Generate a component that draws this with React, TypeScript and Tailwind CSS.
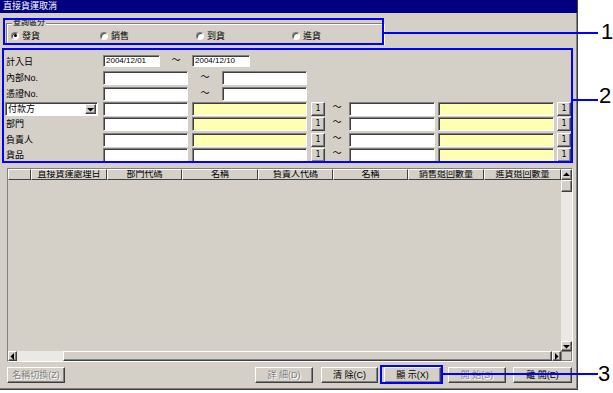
import React from "react";

const raised =
  "bg-[#d4d0c8] border border-t-white border-l-white border-b-[#404040] border-r-[#404040] shadow-[inset_-1px_-1px_0_#808080]";
const sunken =
  "border border-t-[#808080] border-l-[#808080] border-b-white border-r-white shadow-[inset_1px_1px_0_#404040]";

function Tri({ dir }: { dir: "up" | "down" | "left" | "right" }) {
  const pts: Record<string, string> = {
    up: "0,4 3.5,0.5 7,4",
    down: "0,1 3.5,4.5 7,1",
    left: "4,0 0.5,3.5 4,7",
    right: "1,0 4.5,3.5 1,7",
  };
  const vertical = dir === "up" || dir === "down";
  return (
    <svg width={vertical ? 7 : 5} height={vertical ? 5 : 7} viewBox={vertical ? "0 0 7 5" : "0 0 5 7"}>
      <polygon points={pts[dir]} fill="#000" />
    </svg>
  );
}

function Radio({ label, checked, cls }: { label: string; checked?: boolean; cls: string }) {
  return (
    <div className={`flex items-center shrink-0 ${cls}`}>
      <div className="relative w-[8px] h-[8px] rounded-full bg-white border border-t-[#808080] border-l-[#808080] border-b-white border-r-white shadow-[inset_1px_1px_0_#404040] flex items-center justify-center">
        {checked && <div className="w-[3px] h-[3px] rounded-full bg-black" />}
      </div>
      <span className="ml-[3px] text-[9px] leading-[10px]">{label}</span>
    </div>
  );
}

function Box({ cls, yellow, text }: { cls: string; yellow?: boolean; text?: string }) {
  return (
    <div
      className={`${sunken} ${
        yellow ? "bg-[#ffffb4]" : "bg-white"
      } shrink-0 text-[8px] leading-[10px] pl-[2px] font-['Liberation_Sans',sans-serif] ${cls}`}
    >
      {text}
    </div>
  );
}

function One() {
  return (
    <div
      className={`${raised} w-[14px] h-[14px] shrink-0 flex items-center justify-center text-[8px] leading-none font-['DejaVu_Sans_Mono',monospace]`}
    >
      1
    </div>
  );
}

function Tilde({ cls }: { cls: string }) {
  return <div className={`shrink-0 text-center text-[9px] leading-[10px] ${cls}`}>～</div>;
}

function Label({ text }: { text: string }) {
  return <div className="w-[103px] pl-[6px] shrink-0 text-[9px] leading-[14px]">{text}</div>;
}

function RefRow({ left, h, midWhite }: { left: React.ReactNode; h: string; midWhite?: boolean }) {
  return (
    <div className={`flex items-start shrink-0 ${h}`}>
      {left}
      <Box cls="w-[85px] h-[14px]" />
      <Box cls="ml-[4px] w-[115px] h-[14px]" yellow={!midWhite} />
      <div className="ml-[4px]">
        <One />
      </div>
      <Tilde cls="w-[24px]" />
      <Box cls="w-[86px] h-[14px]" />
      <Box cls="ml-[3px] w-[116px] h-[14px]" yellow />
      <div className="ml-[3px]">
        <One />
      </div>
    </div>
  );
}

function Btn({ text, cls, disabled }: { text: string; cls: string; disabled?: boolean }) {
  return (
    <div
      className={`${raised} h-[16px] shrink-0 flex items-center justify-center text-[9px] leading-none whitespace-pre ${
        disabled ? "text-[#808080] [text-shadow:1px_1px_0_#ffffff]" : "text-black"
      } ${cls}`}
    >
      {text}
    </div>
  );
}

const headers = ["", "直接貨運處理日", "部門代碼", "名稱", "負責人代碼", "名稱", "銷售退回數量", "進貨退回數量"];
const widths = ["w-[23px]", "w-[76px]", "w-[75px]", "w-[76px]", "w-[75px]", "w-[75px]", "w-[76px]", "w-[77px]"];

export default function App() {
  return (
    <div className="relative w-[613px] h-[393px] bg-white overflow-hidden text-black font-['Liberation_Sans','Noto_Sans_CJK_TC',sans-serif]">
      <div className="w-[578px] h-[390px] bg-[#d4d0c8] border-r border-b border-[#404040] shadow-[inset_-1px_-1px_0_#808080] flex flex-col">
        {/* title bar */}
        <div className="h-[13px] shrink-0 bg-[#000080] text-white text-[9px] leading-[13px] pl-[3px]">直接貨運取消</div>

        {/* group box */}
        <div className="relative ml-[6px] mt-[10px] w-[378px] h-[21px] shrink-0 border border-[#808080] shadow-[inset_1px_1px_0_#ffffff,1px_1px_0_#ffffff]">
          <span className="absolute left-[5px] top-[-5px] px-[1px] bg-[#d4d0c8] text-[8px] leading-[8px]">查詢區分</span>
          <div className="flex items-center h-full pt-[4px] pl-[4px]">
            <Radio label="發貨" checked cls="w-[89px]" />
            <Radio label="銷售" cls="w-[96px]" />
            <Radio label="到貨" cls="w-[96px]" />
            <Radio label="進貨" cls="w-[60px]" />
          </div>
        </div>

        {/* form */}
        <div className="mt-[11px] flex flex-col shrink-0">
          <div className="flex items-start h-[16px] shrink-0">
            <Label text="計入日" />
            <Box cls="w-[57px] h-[12px]" text="2004/12/01" />
            <Tilde cls="w-[32px]" />
            <Box cls="w-[58px] h-[12px]" text="2004/12/10" />
          </div>
          <div className="flex items-start h-[16px] shrink-0">
            <Label text="內部No." />
            <Box cls="w-[85px] h-[14px]" />
            <Tilde cls="w-[34px] pt-[1px]" />
            <Box cls="w-[85px] h-[14px]" />
          </div>
          <div className="flex items-start h-[15px] shrink-0">
            <Label text="憑證No." />
            <Box cls="w-[85px] h-[14px]" />
            <Tilde cls="w-[34px] pt-[1px]" />
            <Box cls="w-[85px] h-[14px]" />
          </div>
          <RefRow
            h="h-[15px]"
            left={
              <div className="w-[103px] pl-[5px] shrink-0">
                <div className={`${sunken} bg-white w-[93px] h-[14px] flex items-stretch`}>
                  <span className="flex-1 pl-[2px] text-[9px] leading-[12px]">付款方</span>
                  <div className={`${raised} w-[11px] my-[1px] mr-[1px] flex items-center justify-center`}>
                    <Tri dir="down" />
                  </div>
                </div>
              </div>
            }
          />
          <RefRow h="h-[16px]" left={<Label text="部門" />} />
          <RefRow h="h-[15px]" left={<Label text="負責人" />} />
          <RefRow h="h-[15px]" left={<Label text="貨品" />} midWhite />
        </div>

        {/* table */}
        <div className="ml-[7px] mt-[5px] w-[566px] h-[194px] shrink-0 border border-t-[#808080] border-l-[#808080] border-b-white border-r-white flex flex-col">
          <div className="flex flex-1 min-h-0">
            <div className="flex-1 flex flex-col min-w-0">
              <div className="flex h-[11px] shrink-0">
                {headers.map((h, i) => (
                  <div
                    key={i}
                    className={`${widths[i]} shrink-0 h-[11px] bg-[#d4d0c8] border-t border-l border-t-white border-l-white border-b border-r border-b-[#404040] border-r-[#404040] text-[9px] leading-[9px] text-center overflow-hidden whitespace-nowrap`}
                  >
                    {h}
                  </div>
                ))}
              </div>
              <div className="flex-1 bg-[#d4d0c8]" />
            </div>
            <div className="w-[11px] shrink-0 flex flex-col">
              <div className={`${raised} h-[11px] shrink-0 flex items-center justify-center`}>
                <Tri dir="up" />
              </div>
              <div className={`${raised} h-[12px] shrink-0`} />
              <div className="flex-1 bg-[#ebe9e5]" />
              <div className={`${raised} h-[10px] shrink-0 flex items-center justify-center`}>
                <Tri dir="down" />
              </div>
            </div>
          </div>
          <div className="flex h-[10px] shrink-0">
            <div className={`${raised} w-[9px] shrink-0 flex items-center justify-center`}>
              <Tri dir="left" />
            </div>
            <div className="w-[46px] shrink-0 bg-[#ebe9e5]" />
            <div className={`${raised} flex-1`} />
            <div className={`${raised} w-[9px] shrink-0 flex items-center justify-center`}>
              <Tri dir="right" />
            </div>
            <div className="w-[11px] shrink-0 bg-[#d4d0c8] border border-[#808080]" />
          </div>
        </div>

        {/* buttons */}
        <div className="mt-[5px] flex items-start shrink-0">
          <Btn text="名稱切換(Z)" cls="ml-[7px] w-[58px]" disabled />
          <Btn text="詳 細(D)" cls="ml-[190px] w-[58px]" disabled />
          <Btn text="清 除(C)" cls="ml-[8px] w-[57px]" />
          <Btn text="顯 示(X)" cls="ml-[6px] w-[57px]" />
          <Btn text="開 始(S)" cls="ml-[7px] w-[58px]" disabled />
          <Btn text="離 開(E)" cls="ml-[7px] w-[59px]" />
        </div>
      </div>

      {/* callouts */}
      <div className="absolute left-[3px] top-[18px] w-[381px] h-[27px] border-2 border-[#0000ff]" />
      <div className="absolute left-[384px] top-[32px] w-[214px] h-[2px] bg-[#0000ff]" />
      <div className="absolute left-[601px] top-[21px] text-[22px] leading-none font-['Liberation_Sans',sans-serif]">1</div>

      <div className="absolute left-[2px] top-[48px] w-[571px] h-[115px] border-2 border-[#0000ff]" />
      <div className="absolute left-[573px] top-[99px] w-[25px] h-[2px] bg-[#0000ff]" />
      <div className="absolute left-[599px] top-[85px] text-[22px] leading-none font-['Liberation_Sans',sans-serif]">2</div>

      <div className="absolute left-[380px] top-[365px] w-[63px] h-[19px] border-2 border-[#0000ff]" />
      <div className="absolute left-[443px] top-[373px] w-[155px] h-[2px] bg-[#0000ff]" />
      <div className="absolute left-[598px] top-[363px] text-[22px] leading-none font-['Liberation_Sans',sans-serif]">3</div>
    </div>
  );
}
